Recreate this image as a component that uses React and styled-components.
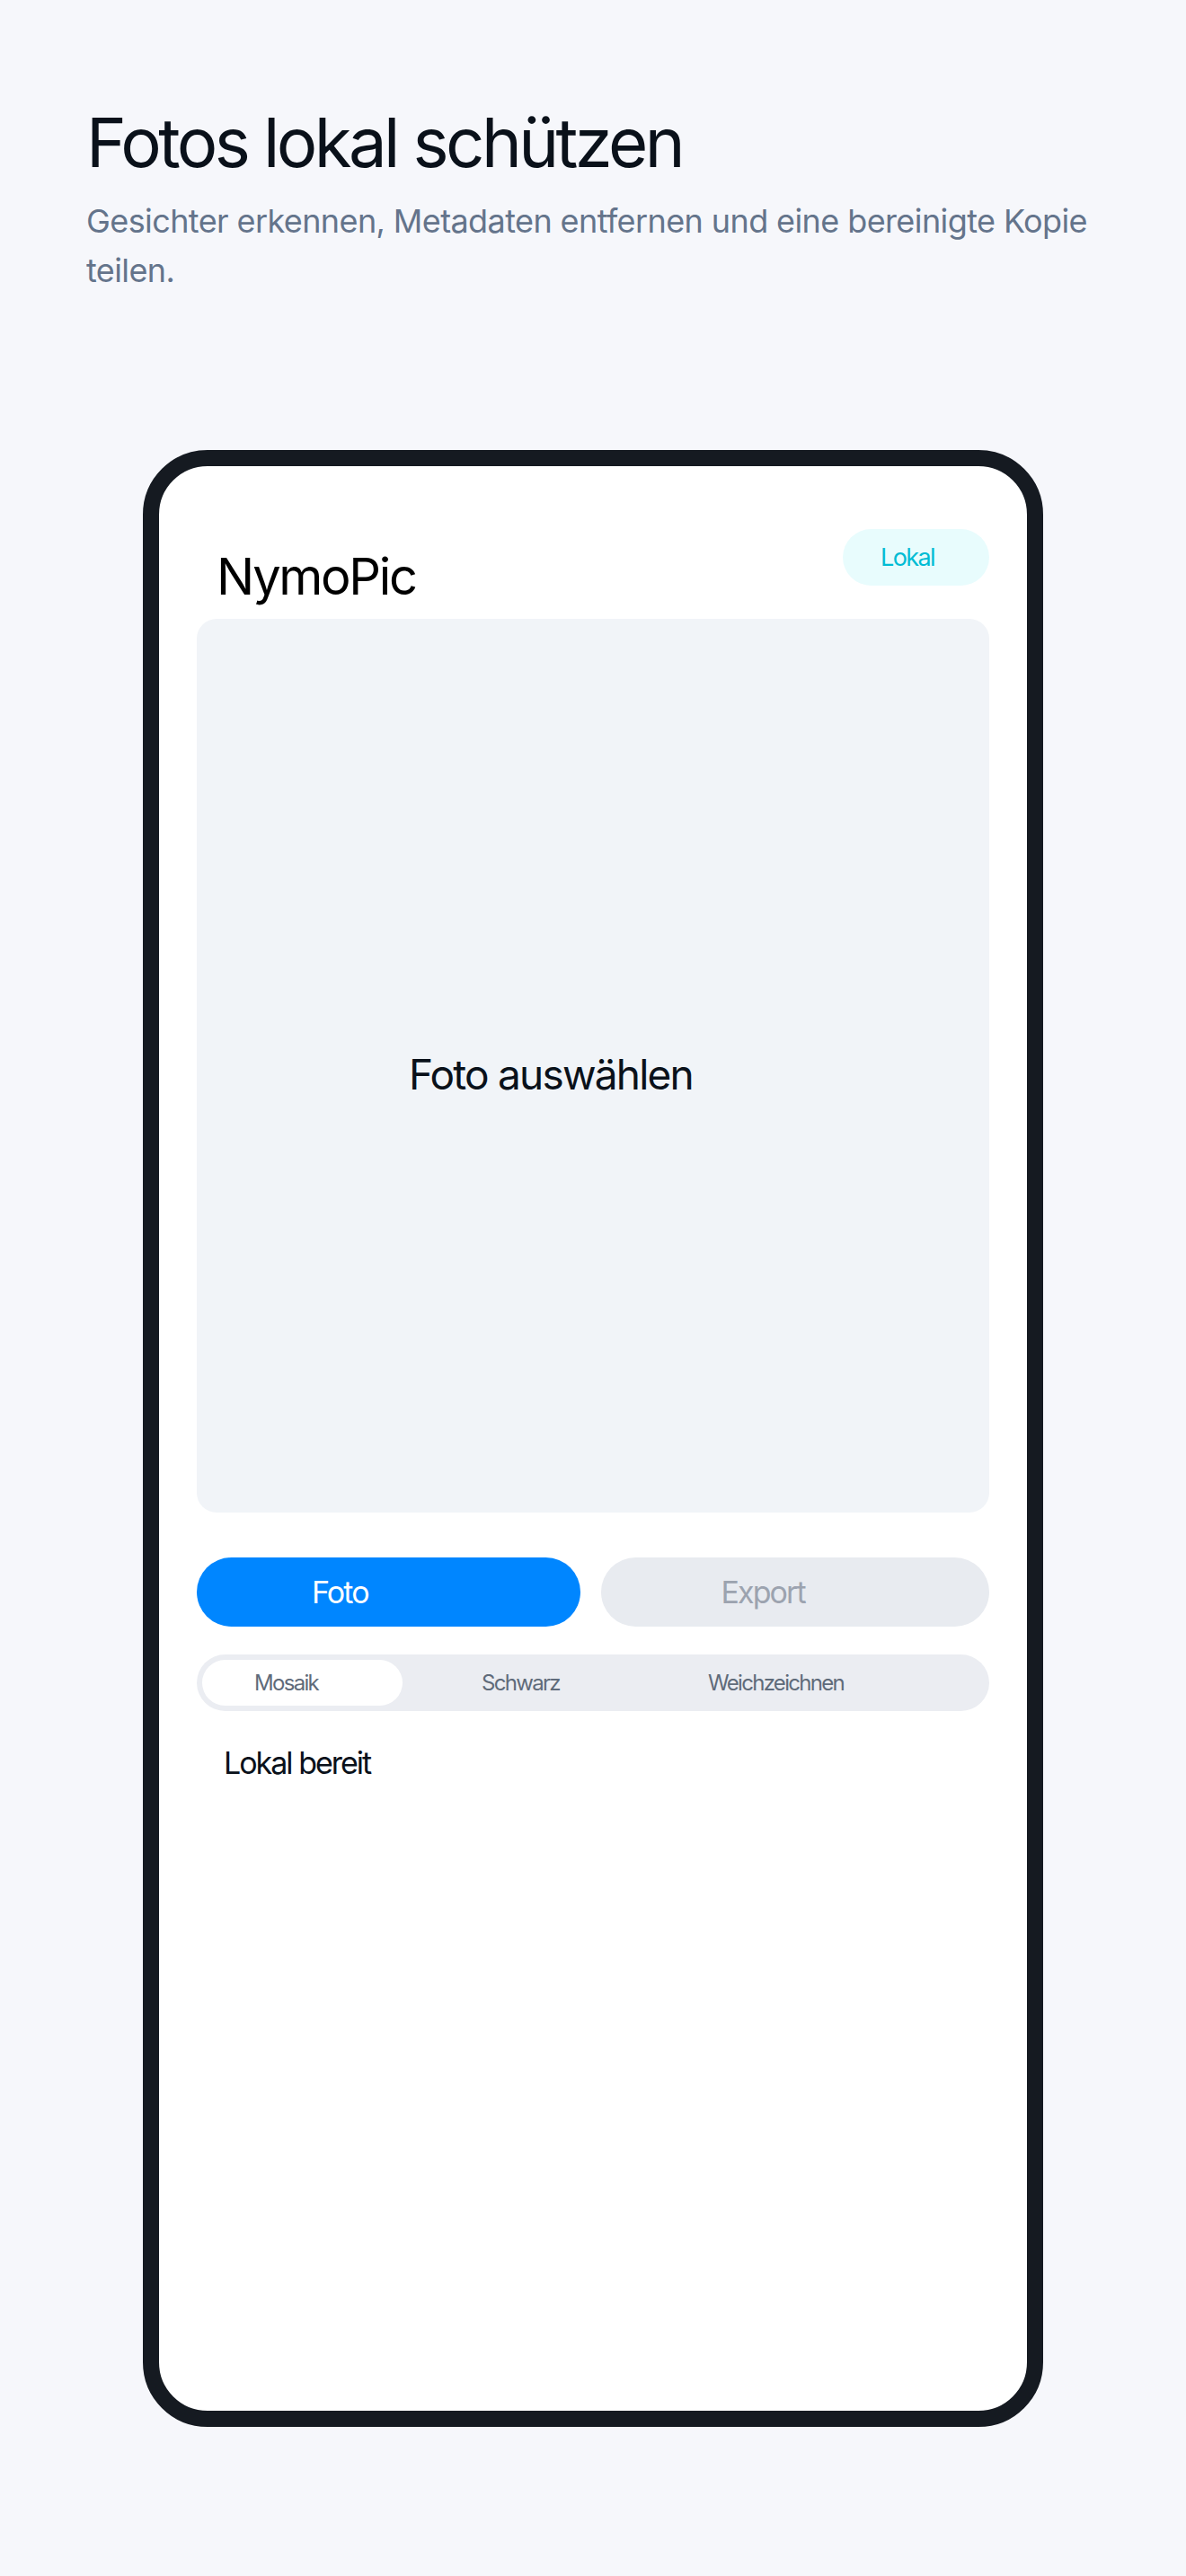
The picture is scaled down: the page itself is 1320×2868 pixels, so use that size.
import React from 'react';
import styled, { createGlobalStyle } from 'styled-components';

const GlobalStyle = createGlobalStyle`
  html, body {
    margin: 0;
    padding: 0;
    background: #f6f7fb;
  }
  body {
    font-family: Inter, Roboto, "Liberation Sans", sans-serif;
    min-height: 2868px;
  }
`

const Page = styled.div`
  padding: 112px 96px 0 96px;
`

const Heading = styled.h1`
  margin: 0;
  font-size: 76px;
  font-weight: 400;
  line-height: 92px;
  letter-spacing: -3.6px;
  color: #0a111a;
`

const Lead = styled.p`
  margin: 15px 0 0 0;
  font-size: 36px;
  line-height: 55px;
  letter-spacing: -0.6px;
  color: #64748b;
  max-width: 1128px;
`

const Phone = styled.div`
  box-sizing: border-box;
  width: 1002px;
  height: 2201px;
  margin: 172px auto 0 auto;
  border: 18px solid #151a21;
  border-radius: 72px;
  background: #ffffff;
  padding: 70px 42px 0 42px;
  display: flex;
  flex-direction: column;
`

const Header = styled.div`
  display: flex;
  justify-content: space-between;
  align-items: flex-start;
`

const AppName = styled.div`
  margin-top: 19px;
  padding-left: 22px;
  font-size: 56px;
  line-height: 68px;
  letter-spacing: -2.3px;
  color: #000000;
`

const Badge = styled.div`
  box-sizing: border-box;
  width: 163px;
  height: 63px;
  border-radius: 32px;
  background: #e8fcfd;
  color: #00bcd4;
  font-size: 27px;
  letter-spacing: -1.6px;
  display: flex;
  align-items: center;
  padding-left: 42px;
`

const Picker = styled.div`
  margin-top: 13px;
  height: 995px;
  border-radius: 22px;
  background: #f1f4f8;
  display: flex;
  align-items: center;
  padding: 19px 0 0 236px;
  box-sizing: border-box;
  font-size: 46px;
  letter-spacing: -1.8px;
  color: #0a111a;
`

const ButtonRow = styled.div`
  margin-top: 50px;
  display: flex;
  gap: 23px;
`

const Button = styled.div`
  flex: 1;
  height: 77px;
  border-radius: 39px;
  display: flex;
  align-items: center;
  box-sizing: border-box;
  padding-left: ${p => p.$indent}px;
  font-size: 34px;
  letter-spacing: -1.9px;
  background: ${p => (p.$primary ? '#0086ff' : '#e8ebf0')};
  color: ${p => (p.$primary ? '#ffffff' : '#9ca3af')};
`

const Segmented = styled.div`
  margin-top: 31px;
  height: 63px;
  box-sizing: border-box;
  padding: 6px;
  border-radius: 32px;
  background: #ebedf2;
  display: flex;
`

const Segment = styled.div`
  box-sizing: border-box;
  width: ${p => p.$w}px;
  height: 51px;
  border-radius: 26px;
  display: flex;
  align-items: center;
  padding-left: ${p => p.$indent}px;
  font-size: 24px;
  letter-spacing: -1.7px;
  color: #5f6b7a;
  background: ${p => (p.$active ? '#ffffff' : 'transparent')};
`

const Status = styled.div`
  margin-top: 37px;
  padding-left: 30px;
  font-size: 34px;
  line-height: 41px;
  letter-spacing: -2px;
  color: #0a111a;
`

export default function App() {
  return (
    <>
      <GlobalStyle />
      <Page>
        <Heading>Fotos lokal schützen</Heading>
        <Lead>Gesichter erkennen, Metadaten entfernen und eine bereinigte Kopie teilen.</Lead>
      </Page>
      <Phone>
        <Header>
          <AppName>NymoPic</AppName>
          <Badge>Lokal</Badge>
        </Header>
        <Picker>Foto auswählen</Picker>
        <ButtonRow>
          <Button $primary $indent={128}>Foto</Button>
          <Button $indent={134}>Export</Button>
        </ButtonRow>
        <Segmented>
          <Segment $active $w={223} $indent={58}>Mosaik</Segment>
          <Segment $w={300} $indent={88}>Schwarz</Segment>
          <Segment $w={340} $indent={40}>Weichzeichnen</Segment>
        </Segmented>
        <Status>Lokal bereit</Status>
      </Phone>
    </>
  );
}
